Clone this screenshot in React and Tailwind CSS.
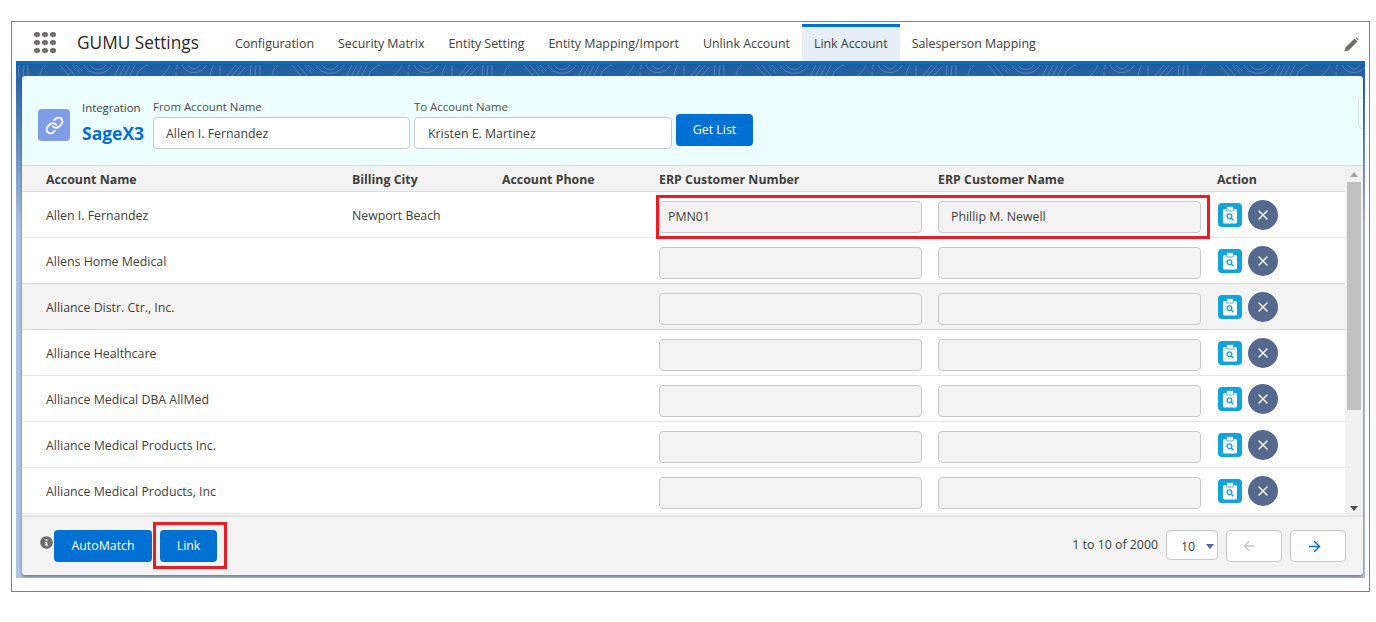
import React from 'react';
import { ArrowLeft, ArrowRight, Link, X } from 'lucide-react';
import { FaInfoCircle } from 'react-icons/fa';

const tabs = ['Configuration', 'Security Matrix', 'Entity Setting', 'Entity Mapping/Import', 'Unlink Account', 'Link Account', 'Salesperson Mapping'];

const rows = [
  { name: 'Allen I. Fernandez', city: 'Newport Beach', number: 'PMN01', customer: 'Phillip M. Newell' },
  { name: 'Allens Home Medical' },
  { name: 'Alliance Distr. Ctr., Inc.', hover: true },
  { name: 'Alliance Healthcare' },
  { name: 'Alliance Medical DBA AllMed' },
  { name: 'Alliance Medical Products Inc.' },
  { name: 'Alliance Medical Products, Inc' },
];

const ClipboardSearch = () => (
  <svg width="16" height="18" viewBox="0 0 16 18">
    <rect x="1" y="3" width="14" height="14.5" rx="1.5" fill="#fff" />
    <rect x="4.5" y="0.5" width="7" height="4.5" rx="1.2" fill="#fff" stroke="#0ea5dc" strokeWidth="0.8" />
    <circle cx="7.4" cy="10.2" r="2.4" fill="none" stroke="#0ea5dc" strokeWidth="1.3" />
    <path d="M9.2 12 L11.4 14.2" stroke="#0ea5dc" strokeWidth="1.4" />
  </svg>
);

// topographic lines behind the card
const Contours = () => (
  <svg className="absolute inset-x-0 top-0" width="1349" height="13" viewBox="0 0 1349 13">
    <defs>
      <pattern id="contour" width="232" height="13" patternUnits="userSpaceOnUse">
        <g fill="none" stroke="#7fa6d0" strokeWidth="0.7" opacity="0.7">
          <path d="M2 13 L3 1 M7 13 L8 1 M12 13 L12 1" />
          <path d="M24 13 C24 8 26 4 30 1" />
          <path d="M44 1 L54 13 M50 1 L60 13 M56 1 L64 9 M60 1 L66 7" />
          <path d="M68 1 C74 12 90 12 96 1 M74 1 C78 7 86 7 90 1" />
          <path d="M98 13 L104 1 M103 13 L109 1 M108 13 L114 1 M113 13 L119 1" />
          <path d="M120 13 C122 7 126 3 132 1" />
          <path d="M144 13 C150 9 152 5 154 1" />
          <path d="M160 13 L160 8 M161 5 L161 1" />
          <path d="M166 1 C170 11 186 11 190 1 M172 1 C175 6 181 6 184 1" />
          <path d="M194 13 C194 8 196 4 198 1 M204 13 L204 1" />
          <path d="M210 13 L220 1 M215 13 L225 1 M220 13 L230 3" />
        </g>
      </pattern>
    </defs>
    <rect width="1349" height="13" fill="url(#contour)" />
  </svg>
);

const Row = ({ row }) => (
  <div className={`flex h-[46px] items-center border-b pl-6 ${row.hover ? 'border-[#d8d8d8] bg-[#f3f3f3] shadow-[0_-1px_0_#d8d8d8]' : 'border-[#e5e5e5] bg-white'}`}>
    <div className="w-[306px] pt-1">{row.name}</div>
    <div className="w-[150px] pt-1">{row.city}</div>
    <div className="w-[157px]" />
    <input readOnly value={row.number || ''} className="mr-4 mt-1 h-8 w-[263px] rounded border border-[#c9c9c9] bg-[#f3f3f3] px-2 text-[12.35px] outline-none" />
    <input readOnly value={row.customer || ''} className="mt-1 h-8 w-[263px] rounded border border-[#c9c9c9] bg-[#f3f3f3] px-3 text-[12.35px] outline-none" />
    <div className="ml-[17px] flex h-6 w-6 items-center justify-center rounded bg-[#0ea5dc]">
      <ClipboardSearch />
    </div>
    <div className="ml-1.5 flex h-[30px] w-[30px] items-center justify-center rounded-full bg-[#54698d] text-white">
      <X size={16} strokeWidth={2} />
    </div>
  </div>
);

export default function App() {
  return (
    <div className="h-[622px] w-[1376px] bg-white pl-[11px] pt-[21px] font-['Open_Sans','Noto_Sans',sans-serif] text-[12.35px] text-[#3e3e3c]">
      <div className="h-[571px] w-[1359px] border border-[#808080] px-1">
        {/* header */}
        <div className="flex h-[39px] items-end">
          <div className="mb-[8px] ml-[18px] grid w-[22px] grid-cols-3 gap-[2.5px]">
            {[...Array(9)].map((_, i) => (
              <span key={i} className="h-[5.5px] w-[5.5px] rounded-full bg-[#706e6b]" />
            ))}
          </div>
          <div className="mb-[6px] ml-[21px] w-[146px] text-[17.3px] leading-6 text-[#2b2826]">GUMU Settings</div>
          <div className="flex h-[37px] text-[12.4px]">
            {tabs.map((t) => (
              <div
                key={t}
                className={`flex items-center px-3 ${t === 'Link Account' ? 'border-t-[3px] border-[#0070d2] bg-[#e6eef8]' : 'border-t-[3px] border-transparent'}`}
              >
                {t}
              </div>
            ))}
          </div>
          <svg className="mb-[9px] ml-auto mr-[6px]" width="15" height="15" viewBox="0 0 15 15">
            <path d="M0.5 14.5 L1.5 10.5 L10.5 1.5 L13.5 4.5 L4.5 13.5 Z" fill="#706e6b" />
            <path d="M11.5 0.8 L12.4 0.3 L14.7 2.6 L14.2 3.5 Z" fill="#706e6b" />
          </svg>
        </div>

        {/* blue panel */}
        <div className="relative h-[517px] overflow-hidden border-t-[3px] border-[#0070d2] bg-gradient-to-b from-[#1b5c9e] to-[#aec3e2] to-[32%] pl-[6px] pr-[2px] pt-3">
          <Contours />
          <div className="relative flex h-[499px] flex-col overflow-hidden rounded bg-white shadow-[0_2px_3px_rgba(0,0,0,0.35)]">
            {/* filters */}
            <div className="relative flex h-[90px] shrink-0 border-b border-[#dddbda] bg-[#ecfeff] pl-4">
              <div className="mt-[33px] flex h-8 w-8 items-center justify-center rounded bg-[#7f9ce6] text-white">
                <Link size={19} strokeWidth={2.4} />
              </div>
              <div className="ml-3 mt-[23px] w-[71px]">
                <div className="text-[11.4px] leading-[18px]">Integration</div>
                <div className="mt-[4px] text-[17.5px] font-bold leading-[24px] text-[#0070d2]">SageX3</div>
              </div>
              <div className="mt-[21px] w-[261px]">
                <div className="text-[11.4px] leading-[20px] text-[#514f4d]">From Account Name</div>
                <input readOnly value="Allen I. Fernandez" className="h-8 w-[257px] rounded border border-[#c9c9c9] bg-white px-3 text-[12.35px] outline-none" />
              </div>
              <div className="mt-[21px] w-[262px]">
                <div className="text-[11.4px] leading-[20px] text-[#514f4d]">To Account Name</div>
                <input readOnly value="Kristen E. Martinez" className="h-8 w-[258px] rounded border border-[#c9c9c9] bg-white pl-[13px] pr-3 text-[12.35px] outline-none" />
              </div>
              <button className="mt-[38px] h-8 w-[77px] rounded bg-[#0070d2] text-[12.35px] text-white">Get List</button>
              <div className="absolute -right-1 top-[21px] h-8 w-[9px] rounded border border-[#d8e2e6]" />
            </div>

            {/* table */}
            <div className="relative flex h-[349px] shrink-0 overflow-hidden">
              <div className="w-[1323px]">
                <div className="flex h-[26px] items-center border-b border-[#dddbda] bg-[#f3f3f3] pl-6 pt-1 font-bold">
                  <div className="w-[306px]">Account Name</div>
                  <div className="w-[150px]">Billing City</div>
                  <div className="w-[157px]">Account Phone</div>
                  <div className="w-[279px]">ERP Customer Number</div>
                  <div className="w-[279px]">ERP Customer Name</div>
                  <div>Action</div>
                </div>
                {rows.map((r) => (
                  <Row key={r.name} row={r} />
                ))}
              </div>
              <div className="flex w-[18px] flex-col items-center bg-[#f1f1f1]">
                <div className="mt-[6px] h-0 w-0 border-x-[4px] border-b-[5px] border-x-transparent border-b-[#a3a3a3]" />
                <div className="mt-[5px] h-[228px] w-[14px] bg-[#c1c1c1]" />
                <div className="mb-[4px] mt-auto h-0 w-0 border-x-[4px] border-t-[5px] border-x-transparent border-t-[#505050]" />
              </div>
              <div className="absolute left-[634px] top-[29px] h-[44px] w-[554px] border-[3px] border-[#ed1c24]" />
            </div>

            {/* footer */}
            <div className="relative flex flex-1 items-center border-t-2 border-[#e5e5e5] bg-[#f3f3f3] pl-[18px] pr-[17px]">
              <FaInfoCircle className="mb-[8px] text-[#706e6b]" size={13} />
              <button className="ml-[1px] h-8 w-[98px] rounded bg-[#0070d2] text-white">AutoMatch</button>
              <button className="ml-2 h-8 w-[57px] rounded bg-[#0070d2] text-white">Link</button>
              <div className="absolute left-[131px] top-[5px] h-[47px] w-[74px] border-[3px] border-[#ed1c24]" />
              <span className="mb-[2px] ml-auto">1 to 10 of 2000</span>
              <div className="relative mb-[3px] ml-2 flex h-[30px] w-[52px] items-center rounded border border-[#c9c9c9] bg-white pl-[14px] pt-[5px]">
                10
                <span className="absolute right-[3px] top-[13px] h-0 w-0 border-x-[4.5px] border-t-[5px] border-x-transparent border-t-[#54698d]" />
              </div>
              <div className="ml-2 flex h-8 w-14 items-center justify-center rounded border border-[#c9c9c9] bg-white pr-2.5 text-[#c9c9c9]">
                <ArrowLeft size={16} />
              </div>
              <div className="ml-2 flex h-8 w-14 items-center justify-center rounded border border-[#c9c9c9] bg-white pr-2 text-[#0070d2]">
                <ArrowRight size={17} />
              </div>
            </div>
          </div>
        </div>
      </div>
    </div>
  );
}
